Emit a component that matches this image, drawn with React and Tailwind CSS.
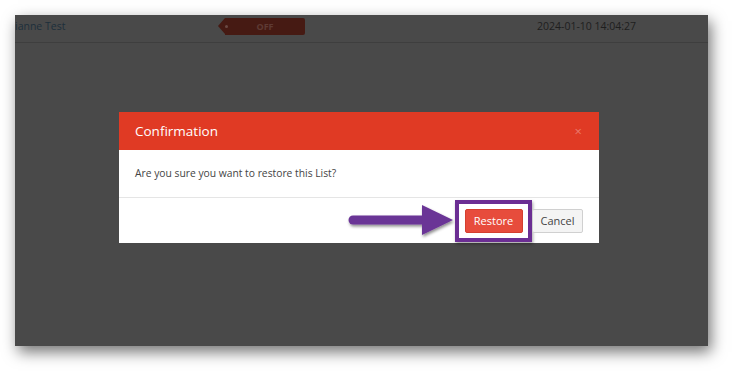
export default function App() {
  return (
    <div className="w-[733px] h-[371px] bg-white pl-[15px] pt-[15px]" style={{ fontFamily: '"Open Sans", "Liberation Sans", sans-serif' }}>
      <div className="relative w-[693px] h-[331px] bg-[#494949] shadow-[3px_6px_14px_rgba(0,0,0,0.55)] overflow-hidden">
        {/* background row */}
        <div className="h-[28px] border-b border-[#3e3e3e] flex items-start pt-[3px] text-[10.5px] text-[#1d2f3b]">
          <div className="w-[203px] leading-[16px]">ianne Test</div>
          <div className="relative w-[87px] h-[17px] flex items-center">
            <div className="absolute left-0 top-0 w-0 h-0 border-y-[8.5px] border-y-transparent border-r-[7px] border-r-[#461a13]" />
            <div className="ml-[7px] flex-1 h-[17px] bg-[#461a13] rounded-r-[2px] flex items-center justify-center text-[9px] font-bold text-[#5e3a34]">
              OFF
            </div>
            <div className="absolute left-[7px] top-[7px] w-[3px] h-[3px] rounded-full bg-[#6a4a44]" />
          </div>
          <div className="ml-[232px] leading-[16px] text-[#1e1e1e]">2024-01-10 14:04:27</div>
        </div>

        {/* modal */}
        <div className="absolute left-[104px] top-[97px] w-[480px] bg-white">
          <div className="h-[38px] bg-[#e03a24] flex items-center justify-between pl-[16px] pr-[17px]">
            <span className="text-white text-[13.5px] font-medium">Confirmation</span>
            <span className="text-[#ea7a6c] text-[13px] leading-none">×</span>
          </div>
          <div className="h-[48px] border-b border-[#e5e5e5] flex items-center pl-[16px] text-[10.3px] text-[#444]">
            Are you sure you want to restore this List?
          </div>
          <div className="h-[45px] flex items-center justify-end pr-[16px] pt-[1px]">
            <div className="w-[77px] h-[42px] border-[4px] border-[#6b2e93] flex items-center justify-center shadow-[1px_2px_3px_rgba(0,0,0,0.35)]">
              <div className="w-[58px] h-[24px] bg-[#e74c3c] border border-[#d43f2f] rounded-[2px] flex items-center justify-center text-white text-[11px]">
                Restore
              </div>
            </div>
            <div className="w-[51px] h-[24px] bg-[#f4f4f4] border border-[#d0d0d0] rounded-[2px] flex items-center justify-center text-[#444] text-[11px]">
              Cancel
            </div>
          </div>
        </div>

        {/* arrow */}
        <svg className="absolute left-[330px] top-[188px]" width="112" height="40" viewBox="0 0 112 40">
          <defs>
            <filter id="sh" x="-20%" y="-40%" width="140%" height="180%">
              <feDropShadow dx="1" dy="2" stdDeviation="1.5" floodColor="#000" floodOpacity="0.45" />
            </filter>
          </defs>
          <g filter="url(#sh)">
            <line x1="8" y1="17" x2="82" y2="17" stroke="#6b3596" strokeWidth="9" strokeLinecap="round" />
            <polygon points="77,2 108,17 77,32" fill="#6b3596" />
          </g>
        </svg>
      </div>
    </div>
  );
}
